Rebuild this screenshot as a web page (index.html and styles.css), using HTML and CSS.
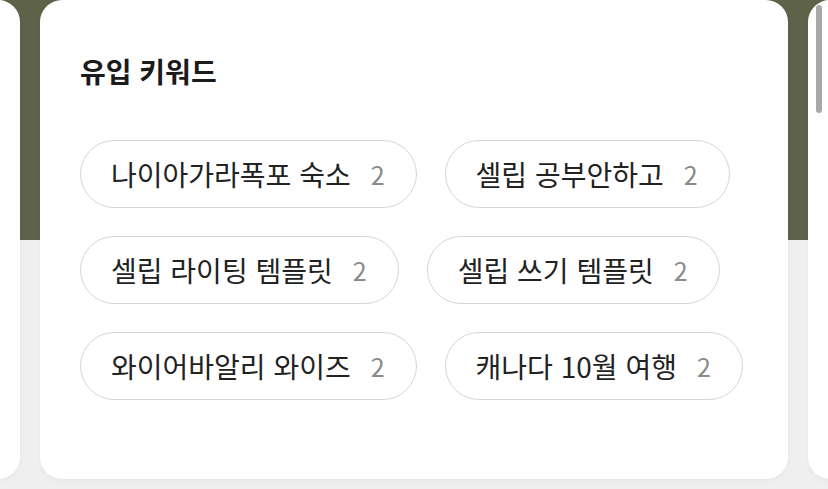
FILE: index.html
```html
<!DOCTYPE html>
<html lang="ko">
<head>
<meta charset="utf-8">
<link rel="stylesheet" href="styles.css">
</head>
<body>
<div class="stage">
  <div class="track">
    <section class="card"></section>
    <section class="card main">
      <h2 class="title">유입 키워드</h2>
      <ul class="chips">
        <li class="chip"><span class="kw">나이아가라폭포 숙소</span><span class="cnt">2</span></li>
        <li class="chip"><span class="kw">셀립 공부안하고</span><span class="cnt">2</span></li>
        <li class="chip"><span class="kw">셀립 라이팅 템플릿</span><span class="cnt">2</span></li>
        <li class="chip"><span class="kw">셀립 쓰기 템플릿</span><span class="cnt">2</span></li>
        <li class="chip"><span class="kw">와이어바알리 와이즈</span><span class="cnt">2</span></li>
        <li class="chip"><span class="kw">캐나다 10월 여행</span><span class="cnt">2</span></li>
      </ul>
    </section>
    <section class="card"></section>
  </div>
  <div class="scrollbar"></div>
</div>
</body>
</html>
```
FILE: styles.css
```css
html, body {
  margin: 0;
  padding: 0;
}
body {
  width: 828px;
  height: 489px;
  overflow: hidden;
  font-family: "Noto Sans CJK KR", "Noto Sans", sans-serif;
  background: linear-gradient(to bottom, #5e6248 0, #5e6248 240px, #efefef 240px, #efefef 100%);
}
.stage {
  position: relative;
  width: 828px;
  height: 489px;
  overflow: hidden;
}
.track {
  display: flex;
  justify-content: center;
  gap: 20px;
  width: 828px;
}
.card {
  flex: 0 0 748px;
  height: 479px;
  background: #fff;
  border-radius: 22px;
  box-shadow: 0 2px 6px rgba(0, 0, 0, 0.04);
  box-sizing: border-box;
}
.main {
  padding: 48px 40px 0 40px;
}
.title {
  margin: 0;
  font-size: 28px;
  line-height: 46px;
  font-weight: 700;
  color: #1b1b1b;
}
.chips {
  list-style: none;
  margin: 46px 0 0 0;
  padding: 0;
  display: flex;
  flex-wrap: wrap;
  gap: 28px 28px;
}
.chip {
  display: flex;
  align-items: center;
  height: 68px;
  box-sizing: border-box;
  padding: 0 31px 0 30px;
  border: 1px solid #d6d6d6;
  border-radius: 34px;
  font-size: 28px;
}
.kw {
  color: #222;
}
.cnt {
  margin-left: 20px;
  font-size: 25px;
  color: #8a8a8a;
}
.scrollbar {
  position: absolute;
  top: 5px;
  left: 816px;
  width: 6px;
  height: 108px;
  border-radius: 3px;
  background: #a9a9a9;
}
```
